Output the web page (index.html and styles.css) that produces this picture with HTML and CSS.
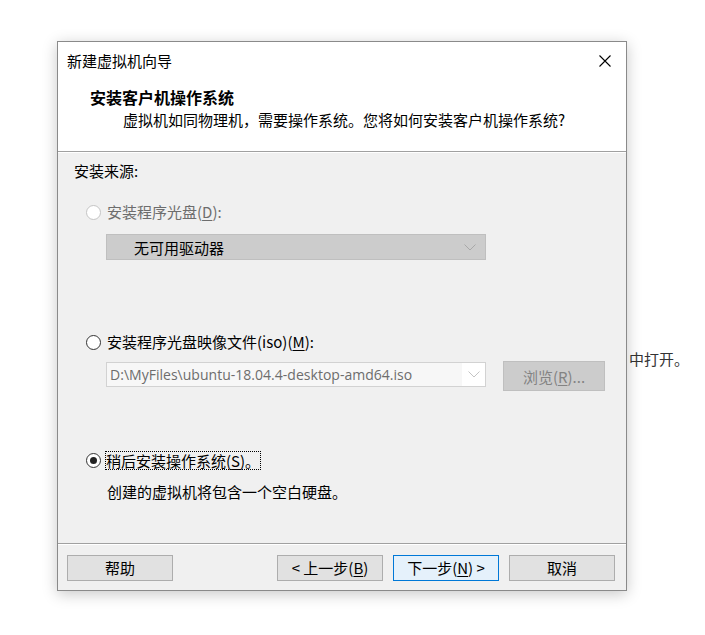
FILE: index.html
```html
<!DOCTYPE html>
<html lang="zh-CN">
<head>
<meta charset="utf-8">
<title>新建虚拟机向导</title>
<link rel="stylesheet" href="styles.css">
</head>
<body>
<div class="behind">中打开。</div>
<div class="window">
  <div class="titlebar">
    <span class="title">新建虚拟机向导</span>
    <span class="close">
      <svg width="12" height="12" viewBox="0 0 12 12"><path d="M0.5 0.5 L11.5 11.5 M11.5 0.5 L0.5 11.5" stroke="#000" stroke-width="1.1" fill="none"/></svg>
    </span>
  </div>
  <div class="header">
    <div class="h-title">安装客户机操作系统</div>
    <div class="h-sub">虚拟机如同物理机，需要操作系统。您将如何安装客户机操作系统?</div>
  </div>
  <div class="etch"></div>
  <div class="body">
    <div class="label">安装来源:</div>
    <div class="opt opt1">
      <div class="radio-row disabled"><span class="radio"></span><span>安装程序光盘(<u>D</u>):</span></div>
      <div class="combo combo-disabled">
        <span class="combo-text">无可用驱动器</span>
        <svg class="chev" width="12" height="7" viewBox="0 0 12 7"><path d="M0.5 0.5 L6 6 L11.5 0.5" stroke="#a8a8a8" fill="none"/></svg>
      </div>
    </div>
    <div class="opt opt2">
      <div class="radio-row"><span class="radio"></span><span>安装程序光盘映像文件(iso)(<u>M</u>):</span></div>
      <div class="iso-row">
        <div class="combo combo-iso">
          <span class="iso-text">D:\MyFiles\ubuntu-18.04.4-desktop-amd64.iso</span>
          <span class="iso-arrow"><svg class="chev" width="12" height="7" viewBox="0 0 12 7"><path d="M0.5 0.5 L6 6 L11.5 0.5" stroke="#c4c4c4" fill="none"/></svg></span>
        </div>
        <div class="browse">浏览(<u>R</u>)...</div>
      </div>
    </div>
    <div class="opt opt3">
      <div class="radio-row"><span class="radio checked"></span><span class="focus">稍后安装操作系统(<u>S</u>)。</span></div>
      <div class="desc">创建的虚拟机将包含一个空白硬盘。</div>
    </div>
  </div>
  <div class="etch"></div>
  <div class="footer">
    <div class="btn">帮助</div>
    <div class="spacer"></div>
    <div class="btn">&lt; 上一步(<u>B</u>)</div>
    <div class="btn primary">下一步(<u>N</u>) &gt;</div>
    <div class="btn">取消</div>
  </div>
</div>
</body>
</html>
```
FILE: styles.css
```css
html, body {
  margin: 0;
  padding: 0;
  background: #ffffff;
}
body {
  font-family: "Noto Sans CJK SC", "Noto Sans", sans-serif;
  font-size: 15px;
  color: #000;
  position: relative;
  width: 705px;
  height: 635px;
  overflow: hidden;
}
.behind {
  position: absolute;
  left: 629px;
  top: 349px;
  line-height: 20px;
  color: #333;
  z-index: 0;
}
.window {
  position: relative;
  z-index: 1;
  box-sizing: border-box;
  margin: 41px 0 0 57px;
  width: 570px;
  height: 550px;
  border: 1px solid #8a8a8a;
  background: #f0f0f0;
  box-shadow: 0 3px 14px rgba(0,0,0,0.22);
  display: flex;
  flex-direction: column;
}
.titlebar {
  height: 38px;
  background: #fff;
  display: flex;
  align-items: center;
  justify-content: space-between;
  padding-left: 9px;
}
.title {
  line-height: 20px;
}
.close {
  width: 42px;
  display: flex;
  justify-content: center;
  align-items: center;
}
.header {
  background: #fff;
  height: 71px;
  box-sizing: border-box;
  padding-top: 7px;
}
.h-title {
  font-weight: bold;
  font-size: 16px;
  line-height: 20px;
  padding-left: 32px;
}
.h-sub {
  margin-top: 3px;
  line-height: 20px;
  padding-left: 65px;
}
.etch {
  height: 0;
  border-top: 1px solid #a0a0a0;
  border-bottom: 1px solid #ffffff;
}
.body {
  height: 390px;
  box-sizing: border-box;
  padding-top: 8px;
}
.label {
  line-height: 20px;
  padding-left: 16px;
}
.opt {
  padding-left: 28px;
}
.opt1 { margin-top: 21px; }
.opt2 { margin-top: 72px; }
.opt3 { margin-top: 59px; }
.radio-row {
  display: flex;
  align-items: center;
  line-height: 20px;
  height: 20px;
}
.radio-row.disabled {
  color: #6d6d6d;
}
.radio {
  box-sizing: border-box;
  width: 15px;
  height: 15px;
  border-radius: 50%;
  border: 1px solid #333;
  background: #fff;
  margin-right: 6px;
  flex: none;
  position: relative;
}
.disabled .radio {
  border-color: #c4c4c4;
}
.radio.checked::after {
  content: "";
  position: absolute;
  left: 3px;
  top: 3px;
  width: 7px;
  height: 7px;
  border-radius: 50%;
  background: #222;
}
.focus {
  outline: 1px dotted #000;
  outline-offset: -1px;
  padding: 0 1px;
  margin-left: -2px;
  height: 19px;
  line-height: 19px;
}
.combo {
  box-sizing: border-box;
  width: 380px;
  display: flex;
  align-items: center;
  justify-content: space-between;
}
.combo-disabled {
  margin-left: 20px;
  margin-top: 12px;
  height: 26px;
  background: #cccccc;
  border: 1px solid #bfbfbf;
  padding: 0 9px 0 27px;
  color: #000;
}
.iso-row {
  margin-left: 20px;
  margin-top: 10px;
  display: flex;
  align-items: flex-start;
  gap: 17px;
}
.combo-iso {
  height: 25px;
  background: #f7f7f7;
  border: 1px solid #d2d2d2;
}
.iso-text {
  font-family: "Open Sans", "Noto Sans", sans-serif;
  font-size: 14px;
  color: #6d6d6d;
  padding-left: 3px;
  white-space: nowrap;
  letter-spacing: 0.02px;
}
.iso-arrow {
  width: 23px;
  height: 100%;
  background: #ffffff;
  display: flex;
  align-items: center;
  justify-content: center;
}
.browse {
  box-sizing: border-box;
  width: 102px;
  height: 30px;
  margin-top: -1px;
  background: #cccccc;
  border: 1px solid #bfbfbf;
  color: #838383;
  display: flex;
  align-items: center;
  justify-content: center;
}
.desc {
  margin-top: 12px;
  padding-left: 21px;
  line-height: 20px;
}
.footer {
  flex: 1;
  display: flex;
  align-items: flex-start;
  padding: 10px 11px 0 9px;
  gap: 10px;
}
.spacer {
  flex: 1;
}
.btn {
  box-sizing: border-box;
  width: 106px;
  height: 26px;
  background: #e1e1e1;
  border: 1px solid #adadad;
  display: flex;
  align-items: center;
  justify-content: center;
  line-height: 20px;
}
.btn.primary {
  background: #e5f1fb;
  border-color: #0078d7;
}
u {
  text-decoration-thickness: 1px;
  text-underline-offset: 2px;
}
```
